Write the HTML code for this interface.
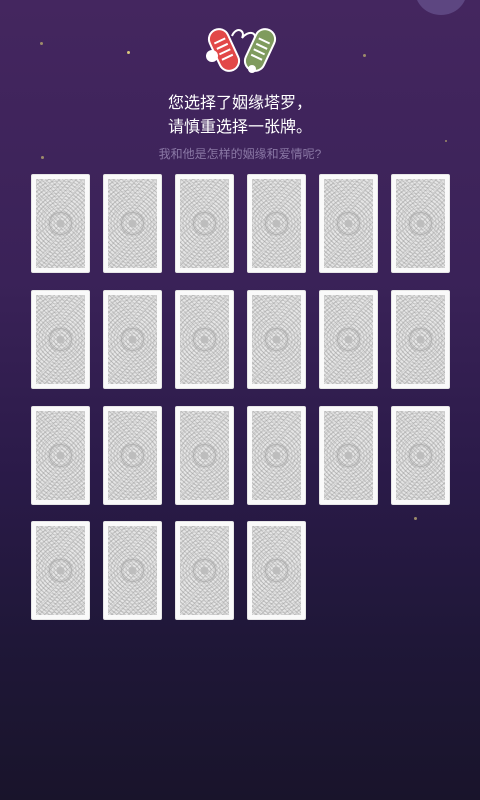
<!DOCTYPE html>
<html><head><meta charset="utf-8"><style>
html,body{margin:0;padding:0}
body{width:480px;height:800px;overflow:hidden;position:relative;background:linear-gradient(#44265f 0%,#3a2258 35%,#2a1a48 60%,#1f1738 80%,#19142b 100%);font-family:"Liberation Sans","Noto Sans CJK SC",sans-serif}
.moon{position:absolute;left:415px;top:-34px;width:52px;height:49px;border-radius:50%;background:#5d4681}
.t{position:absolute;left:0;width:480px;text-align:center;color:#fff;font-size:16px;line-height:23px}
.s{position:absolute;left:0;width:480px;text-align:center;color:#8a78a5;font-size:12px}
.c{position:absolute;width:57px;height:97px;background:#fafafa;border:1px solid #e6e6e6;border-radius:2px}
.c i{position:absolute;left:4px;top:4px;right:4px;bottom:4px;background:
radial-gradient(circle at 50% 50%,#bdbdbd 0 3px,transparent 4px),
radial-gradient(circle at 50% 50%,transparent 10px,#a9a9a9 11px,transparent 12px),
repeating-linear-gradient(45deg,rgba(150,150,150,.35) 0 1px,transparent 1px 3px),
repeating-linear-gradient(-45deg,rgba(150,150,150,.35) 0 1px,transparent 1px 4px),
repeating-radial-gradient(circle at 50% 50%,#cfcfcf 0 1px,#e6e6e6 1px 3px),
#dedede}
.dot{position:absolute;width:3px;height:3px;border-radius:50%;background:#9c8b6a}
</style></head><body>
<div class="moon"></div>
<div class="dot" style="left:40px;top:42px"></div>
<div class="dot" style="left:127px;top:51px;background:#d9c77c"></div>
<div class="dot" style="left:41px;top:156px"></div>
<div class="dot" style="left:363px;top:54px"></div>
<div class="dot" style="left:445px;top:140px;width:2px;height:2px"></div>
<div class="dot" style="left:414px;top:517px"></div>
<svg style="position:absolute;left:202px;top:24px" width="80" height="54" viewBox="0 0 80 54">
<path d="M30 12 C34 2,44 6,40 14 C46 6,56 8,52 16" fill="none" stroke="#fff" stroke-width="2"/>
<g transform="rotate(-25 22 26)"><rect x="12" y="4" width="20" height="44" rx="10" fill="#e24848" stroke="#fff" stroke-width="2"/><path d="M16 16h12M16 22h12M16 28h12M16 34h12" stroke="#fff" stroke-width="2"/></g>
<g transform="rotate(25 58 26)"><rect x="48" y="4" width="20" height="44" rx="10" fill="#7f9b5e" stroke="#fff" stroke-width="2"/><path d="M52 16h12M52 22h12M52 28h12M52 34h12" stroke="#fff" stroke-width="2"/></g>
<circle cx="10" cy="32" r="6" fill="#fff"/><circle cx="50" cy="45" r="4" fill="#fff"/>
</svg>
<div class="t" style="top:92px">您选择了姻缘塔罗，</div>
<div class="t" style="top:116px">请慎重选择一张牌。</div>
<div class="s" style="top:145px">我和他是怎样的姻缘和爱情呢?</div>
<div class="c" style="left:31px;top:174px"><i></i></div><div class="c" style="left:103px;top:174px"><i></i></div><div class="c" style="left:175px;top:174px"><i></i></div><div class="c" style="left:247px;top:174px"><i></i></div><div class="c" style="left:319px;top:174px"><i></i></div><div class="c" style="left:391px;top:174px"><i></i></div>
<div class="c" style="left:31px;top:290px"><i></i></div><div class="c" style="left:103px;top:290px"><i></i></div><div class="c" style="left:175px;top:290px"><i></i></div><div class="c" style="left:247px;top:290px"><i></i></div><div class="c" style="left:319px;top:290px"><i></i></div><div class="c" style="left:391px;top:290px"><i></i></div>
<div class="c" style="left:31px;top:406px"><i></i></div><div class="c" style="left:103px;top:406px"><i></i></div><div class="c" style="left:175px;top:406px"><i></i></div><div class="c" style="left:247px;top:406px"><i></i></div><div class="c" style="left:319px;top:406px"><i></i></div><div class="c" style="left:391px;top:406px"><i></i></div>
<div class="c" style="left:31px;top:521px"><i></i></div><div class="c" style="left:103px;top:521px"><i></i></div><div class="c" style="left:175px;top:521px"><i></i></div><div class="c" style="left:247px;top:521px"><i></i></div>
</body></html>
